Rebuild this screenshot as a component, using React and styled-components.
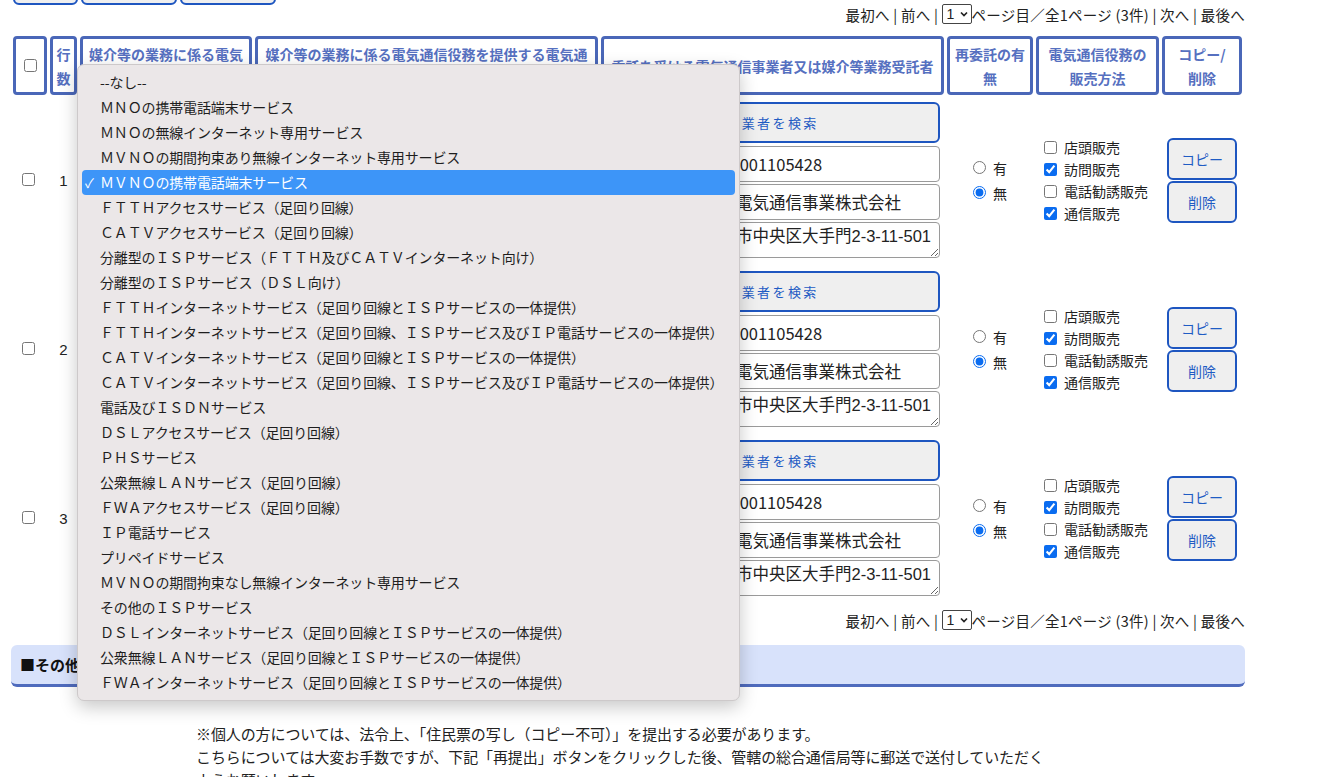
import React from 'react'
import styled, { createGlobalStyle } from 'styled-components'

const GlobalStyle = createGlobalStyle`
  body {
    margin: 0;
    background: #fff;
    color: #222;
    font-family: "Liberation Sans", "Noto Sans CJK JP", sans-serif;
  }
`

const Page = styled.div`
  position: relative;
  width: 1235px;
  padding-left: 10px;
  height: 777px;
  overflow: hidden;
`

const TopButtons = styled.div`
  display: flex;
  gap: 3px;
  margin-top: -36px;
  padding-left: 3px;
`

const TopButton = styled.button`
  width: ${p => p.w}px;
  height: 41px;
  border: 2px solid #1e56c0;
  border-radius: 6px;
  background: #efefef;
`

const Pager = styled.div`
  display: flex;
  justify-content: flex-end;
  align-items: center;
  height: 22px;
  margin: ${p => p.m};
  font-family: "Noto Sans CJK JP", sans-serif;
  font-size: 14.5px;
  letter-spacing: 0.25px;
  color: #222;
  white-space: pre;
`

const PageSelect = styled.span`
  display: inline-flex;
  align-items: center;
  justify-content: space-between;
  box-sizing: border-box;
  width: 30px;
  height: 20px;
  padding: 0 2px 0 4px;
  border: 1px solid #444;
  border-radius: 2px;
  font-family: "Liberation Sans", sans-serif;
  font-size: 14px;
`

const Table = styled.table`
  border-collapse: separate;
  border-spacing: 3px;
  table-layout: fixed;
  width: 1235px;
  margin-top: 8px;
`

const Th = styled.th`
  box-sizing: border-box;
  height: 59px;
  padding: 0 3px;
  border: 3px solid #4a67b8;
  border-radius: 4px;
  color: #5670c0;
  font-family: "Noto Sans CJK JP", sans-serif;
  font-size: 14px;
  font-weight: 700;
  line-height: 24px;
  text-align: center;
  vertical-align: middle;
  overflow: hidden;
`

const Td = styled.td`
  height: 156px;
  padding: ${p => p.pad || '4px 4px 6px'};
  vertical-align: middle;
  text-align: ${p => p.align || 'left'};
  font-size: 15px;
`

const Stack = styled.div`
  display: flex;
  flex-direction: column;
  gap: 2px;
`

const SearchButton = styled.button`
  height: 41px;
  margin-bottom: 1px;
  border: 2px solid #1e56c0;
  border-radius: 6px;
  background: #efefef;
  color: #1f5cc4;
  font-family: "Noto Sans CJK JP", sans-serif;
  font-size: 13px;
  letter-spacing: 2.4px;
`

const Field = styled.div`
  display: grid;
  grid-template-columns: 93px 1fr;
  align-items: center;
  font-family: "Noto Sans CJK JP", sans-serif;
  font-size: 13px;
`

const TextBox = styled.div`
  height: 34px;
  padding: 0 4px;
  border: 1px solid #9a9a9a;
  border-radius: 4px;
  font-size: 16.5px;
  line-height: 34px;
  white-space: nowrap;
  overflow: hidden;
`

const AreaBox = styled.textarea`
  height: 30px;
  padding: 2px 4px;
  border: 1px solid #9a9a9a;
  border-radius: 4px;
  font-family: "Liberation Sans", "Noto Sans CJK JP", sans-serif;
  font-size: 16.5px;
  line-height: 22px;
  color: #222;
  resize: both;
`

const FakeSelect = styled.div`
  height: 24px;
  border: 1px solid #888;
  border-radius: 4px;
  font-family: "Noto Sans CJK JP", sans-serif;
  font-size: 12px;
  line-height: 24px;
  padding: 0 4px;
  white-space: nowrap;
  overflow: hidden;
`

const RadioGroup = styled.div`
  display: inline-flex;
  flex-direction: column;
  gap: 6px;
  text-align: left;
`

const Option = styled.label`
  display: flex;
  align-items: center;
  gap: 7px;
  height: 19px;
  font-family: "Noto Sans CJK JP", sans-serif;
  font-size: 14px;
  color: #222;

  input {
    margin: 0;
    accent-color: #0a6cf0;
  }
`

const CheckGroup = styled.div`
  display: flex;
  flex-direction: column;
  gap: 3px;
  padding-left: 4px;
`

const RowButtons = styled.div`
  display: flex;
  flex-direction: column;
  align-items: center;
  gap: 1px;
`

const SmallButton = styled.button`
  width: 70px;
  height: 42px;
  border: 2px solid #1e56c0;
  border-radius: 6px;
  background: #efefef;
  color: #1f5cc4;
  font-family: "Noto Sans CJK JP", sans-serif;
  font-size: 14px;
`

const Box = styled.input`
  margin: 0;
  width: 13px;
  height: 13px;
  accent-color: #0a6cf0;
`

const SectionBar = styled.div`
  height: 39px;
  margin: 14px 0 0 1px;
  padding-left: 9px;
  display: flex;
  align-items: center;
  background: #d8e2fb;
  border-bottom: 3px solid #4f6bbd;
  border-radius: 6px;
  font-family: "Noto Sans CJK JP", sans-serif;
  font-size: 15px;
  font-weight: 700;
  color: #111;
`

const Notice = styled.div`
  margin: 35px 0 0 186px;
  font-family: "Noto Sans CJK JP", sans-serif;
  font-size: 15px;
  line-height: 23px;
  color: #222;
  letter-spacing: -0.1px;
`

const Menu = styled.ul`
  position: absolute;
  left: 77px;
  top: 64px;
  width: 653px;
  margin: 0;
  padding: 5px 4px;
  list-style: none;
  background: #ebe7e8;
  border: 1px solid #cdc9ca;
  border-radius: 7px;
  box-shadow: 0 6px 18px rgba(0, 0, 0, 0.22);
`

const MenuItem = styled.li`
  position: relative;
  height: 25px;
  padding-left: 18px;
  border-radius: 4px;
  background: ${p => (p.active ? '#3d95f8' : 'transparent')};
  color: ${p => (p.active ? '#fff' : '#1e1e1e')};
  font-family: "Noto Sans CJK JP", sans-serif;
  font-size: 14px;
  line-height: 25px;
  letter-spacing: -0.15px;
  white-space: nowrap;
`

const Tick = styled.span`
  position: absolute;
  left: 3px;
  top: 0;
  font-size: 13px;
`

const services = [
  '--なし--',
  'ＭＮＯの携帯電話端末サービス',
  'ＭＮＯの無線インターネット専用サービス',
  'ＭＶＮＯの期間拘束あり無線インターネット専用サービス',
  'ＭＶＮＯの携帯電話端末サービス',
  'ＦＴＴＨアクセスサービス（足回り回線）',
  'ＣＡＴＶアクセスサービス（足回り回線）',
  '分離型のＩＳＰサービス（ＦＴＴＨ及びＣＡＴＶインターネット向け）',
  '分離型のＩＳＰサービス（ＤＳＬ向け）',
  'ＦＴＴＨインターネットサービス（足回り回線とＩＳＰサービスの一体提供）',
  'ＦＴＴＨインターネットサービス（足回り回線、ＩＳＰサービス及びＩＰ電話サービスの一体提供）',
  'ＣＡＴＶインターネットサービス（足回り回線とＩＳＰサービスの一体提供）',
  'ＣＡＴＶインターネットサービス（足回り回線、ＩＳＰサービス及びＩＰ電話サービスの一体提供）',
  '電話及びＩＳＤＮサービス',
  'ＤＳＬアクセスサービス（足回り回線）',
  'ＰＨＳサービス',
  '公衆無線ＬＡＮサービス（足回り回線）',
  'ＦＷＡアクセスサービス（足回り回線）',
  'ＩＰ電話サービス',
  'プリペイドサービス',
  'ＭＶＮＯの期間拘束なし無線インターネット専用サービス',
  'その他のＩＳＰサービス',
  'ＤＳＬインターネットサービス（足回り回線とＩＳＰサービスの一体提供）',
  '公衆無線ＬＡＮサービス（足回り回線とＩＳＰサービスの一体提供）',
  'ＦＷＡインターネットサービス（足回り回線とＩＳＰサービスの一体提供）',
]

// column widths of the list table (border-box)
const cols = [34, 27, 172, 343, 343, 86, 123, 80]

const rows = [1, 2, 3]

function Pagination({ m }) {
  return (
    <Pager m={m}>
      {'最初へ | 前へ | '}
      <PageSelect>
        1
        <svg width="10" height="10" viewBox="0 0 10 10">
          <path d="M2 3.5 L5 6.5 L8 3.5" fill="none" stroke="#222" strokeWidth="1.7" />
        </svg>
      </PageSelect>
      {'ページ目／全1ページ (3件) | 次へ | 最後へ'}
    </Pager>
  )
}

function Row({ n }) {
  return (
    <tr>
      <Td align="center" pad="4px 6px 6px 2px"><Box type="checkbox" /></Td>
      <Td align="center">{n}</Td>
      <Td><FakeSelect>ＭＶＮＯの携帯電話端末サービス</FakeSelect></Td>
      <Td><FakeSelect>九州電気通信株式会社</FakeSelect></Td>
      <Td>
        <Stack>
          <SearchButton>事業者を検索</SearchButton>
          <Field><span>法人番号</span><TextBox>4290001105428</TextBox></Field>
          <Field><span>名称</span><TextBox>九州電気通信事業株式会社</TextBox></Field>
          <Field><span>住所</span><AreaBox defaultValue="福岡市中央区大手門2-3-11-501" /></Field>
        </Stack>
      </Td>
      <Td align="center">
        <RadioGroup>
          <Option><input type="radio" name={'sub' + n} /> 有</Option>
          <Option><input type="radio" name={'sub' + n} defaultChecked /> 無</Option>
        </RadioGroup>
      </Td>
      <Td>
        <CheckGroup>
          <Option><Box type="checkbox" /> 店頭販売</Option>
          <Option><Box type="checkbox" defaultChecked /> 訪問販売</Option>
          <Option><Box type="checkbox" /> 電話勧誘販売</Option>
          <Option><Box type="checkbox" defaultChecked /> 通信販売</Option>
        </CheckGroup>
      </Td>
      <Td>
        <RowButtons>
          <SmallButton>コピー</SmallButton>
          <SmallButton>削除</SmallButton>
        </RowButtons>
      </Td>
    </tr>
  )
}

export default function App() {
  return (
    <Page>
      <GlobalStyle />
      <TopButtons>
        <TopButton w={65} />
        <TopButton w={96} />
        <TopButton w={96} />
      </TopButtons>
      <Pagination m="-2px 0 0" />

      <Table>
        <colgroup>
          {cols.map((w, i) => <col key={i} style={{ width: w }} />)}
        </colgroup>
        <thead>
          <tr>
            <Th><Box type="checkbox" /></Th>
            <Th>行数</Th>
            <Th>媒介等の業務に係る電気通信役務</Th>
            <Th>媒介等の業務に係る電気通信役務を提供する電気通信事業者</Th>
            <Th>委託を受ける電気通信事業者又は媒介等業務受託者</Th>
            <Th>再委託の有無</Th>
            <Th>電気通信役務の販売方法</Th>
            <Th>コピー/<br />削除</Th>
          </tr>
        </thead>
        <tbody>
          {rows.map(n => <Row key={n} n={n} />)}
        </tbody>
      </Table>

      <Pagination m="4px 0 0" />

      <SectionBar>■その他の添付書類</SectionBar>

      <Notice>
        ※個人の方については、法令上、「住民票の写し（コピー不可）」を提出する必要があります。<br />
        こちらについては大変お手数ですが、下記「再提出」ボタンをクリックした後、管轄の総合通信局等に郵送で送付していただく<br />
        ようお願いします。
      </Notice>

      <Menu>
        {services.map((s, i) => (
          <MenuItem key={s} active={i === 4}>
            {i === 4 && <Tick>✓</Tick>}
            {s}
          </MenuItem>
        ))}
      </Menu>
    </Page>
  )
}
